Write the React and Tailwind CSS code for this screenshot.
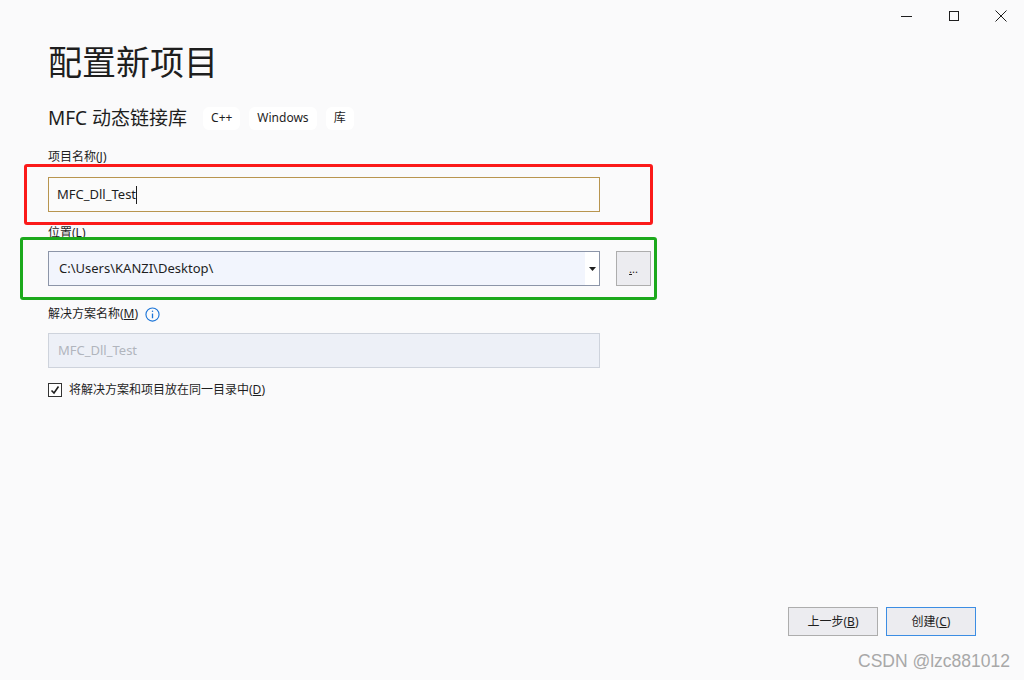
import React from 'react';

const font = { fontFamily: '"Noto Sans", "Noto Sans CJK SC", sans-serif' };

function Tag({ children }) {
    return (
        <span className="h-[23px] px-2 flex items-center bg-white rounded-md text-[12px] text-[#1e1e1e]">
            {children}
        </span>
    );
}

export default function App() {
    return (
        <div className="relative h-[680px] w-[1024px] bg-[#fafafb] text-[#1e1e1e] flex flex-col overflow-hidden" style={font}>
            {/* title bar */}
            <div className="h-8 flex justify-end">
                <button className="w-[47px] h-8 flex items-center justify-center">
                    <span className="block w-[11px] h-px bg-[#1e1e1e]" />
                </button>
                <button className="w-[47px] h-8 flex items-center justify-center">
                    <span className="block w-[10px] h-[10px] border border-[#1e1e1e]" />
                </button>
                <button className="w-[47px] h-8 flex items-center justify-center">
                    <svg width="12" height="12" viewBox="0 0 12 12" stroke="#1e1e1e" strokeWidth="1">
                        <path d="M0.5 0.5 L11.5 11.5 M11.5 0.5 L0.5 11.5" />
                    </svg>
                </button>
            </div>

            <div className="px-[48px] flex flex-col">
                <h1 className="mt-[8px] text-[34px] leading-[44px] font-normal">配置新项目</h1>

                <div className="mt-[20px] h-7 flex items-center">
                    <span className="text-[19px] leading-7">MFC 动态链接库</span>
                    <div className="ml-4 flex items-center gap-[9px]">
                        <Tag>C++</Tag>
                        <Tag>Windows</Tag>
                        <Tag>库</Tag>
                    </div>
                </div>

                <label className="mt-[17px] text-[12px] leading-4">项目名称(J)</label>
                <div className="mt-[12px] w-[552px] h-[35px] border border-[#b8954f] bg-[#fbfbfb] flex items-center pl-[8px] text-[13px]">
                    MFC_Dll_Test<span className="inline-block w-px h-[18px] bg-[#1e1e1e]" />
                </div>

                <label className="mt-[13px] text-[12px] leading-4">位置(<span className="underline">L</span>)</label>
                <div className="mt-[10px] flex items-center gap-4">
                    <div className="w-[552px] h-[35px] border border-[#8c95a8] flex">
                        <div className="flex-1 bg-[#f2f5fd] flex items-center pl-[10px] text-[13px]">
                            C:\Users\KANZI\Desktop\
                        </div>
                        <div className="w-[14px] bg-white flex items-center justify-center">
                            <svg width="7" height="4" viewBox="0 0 7 4" fill="#1e1e1e">
                                <path d="M0 0 H7 L3.5 4 Z" />
                            </svg>
                        </div>
                    </div>
                    <button className="w-[35px] h-[35px] bg-[#ececf0] border border-[#adadad] flex items-center justify-center text-[11px] leading-none">
                        <span><span className="underline">.</span>..</span>
                    </button>
                </div>

                <div className="mt-[20px] flex items-center gap-[7px]">
                    <label className="text-[12px] leading-4">解决方案名称(<span className="underline">M</span>)</label>
                    <svg width="15" height="15" viewBox="0 0 16 16" fill="none" stroke="#1a74d8" strokeWidth="1.2">
                        <circle cx="8" cy="8" r="7" />
                        <path d="M8 7 V12" strokeWidth="1.4" />
                        <circle cx="8" cy="4.6" r="0.8" fill="#1a74d8" stroke="none" />
                    </svg>
                </div>
                <div className="mt-[11px] w-[552px] h-[35px] border border-[#ced3dc] bg-[#edf0f7] flex items-center pl-[9px] text-[13px] text-[#b1b5bd]">
                    MFC_Dll_Test
                </div>

                <div className="mt-[14px] flex items-center gap-[7px]">
                    <span className="w-[14px] h-[14px] border border-[#333] bg-white flex items-center justify-center">
                        <svg width="10" height="10" viewBox="0 0 10 10" fill="none" stroke="#1e1e1e" strokeWidth="1.6">
                            <path d="M1.5 5.5 L4 8 L8.5 1.5" />
                        </svg>
                    </span>
                    <span className="text-[12px] leading-4">将解决方案和项目放在同一目录中(<span className="underline">D</span>)</span>
                </div>
            </div>

            <div className="mt-auto pb-[44px] pr-[48px] flex justify-end gap-2">
                <button className="w-[90px] h-[29px] bg-[#ececf0] border border-[#adadad] text-[12px]">
                    上一步(<span className="underline">B</span>)
                </button>
                <button className="w-[90px] h-[29px] bg-[#ececf0] border border-[#3c8de3] text-[12px]">
                    创建(<span className="underline">C</span>)
                </button>
            </div>

            {/* annotations */}
            <div className="absolute left-[24px] top-[164px] w-[629px] h-[61px] border-[3px] border-[#fb1a1a] rounded-[3px] pointer-events-none" />
            <div className="absolute left-[20px] top-[237px] w-[637px] h-[63px] border-[3px] border-[#1ca91c] rounded-[3px] pointer-events-none" />

            <div className="absolute right-[14px] bottom-[6px] text-[17.5px] text-[#a8a8a8]" style={{ fontFamily: '"Liberation Sans", sans-serif' }}>
                CSDN @lzc881012
            </div>
        </div>
    );
}
